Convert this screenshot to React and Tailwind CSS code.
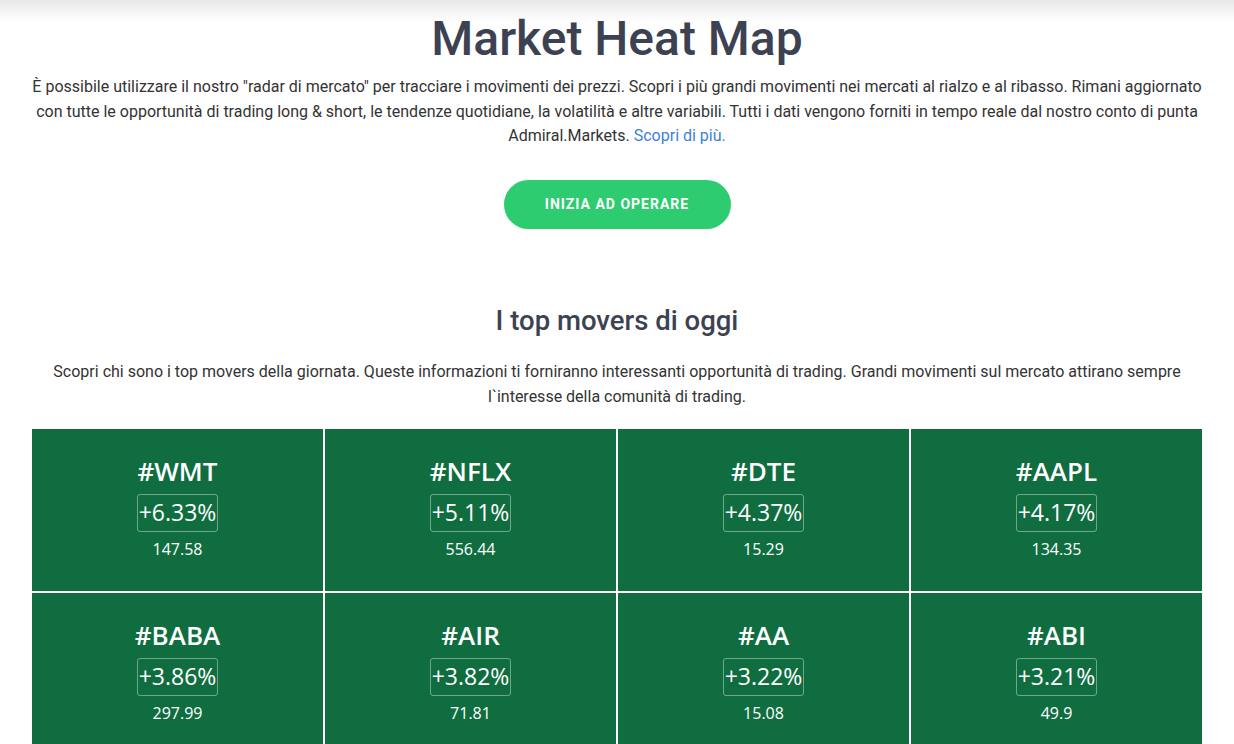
const movers = [
  { t: '#WMT', p: '+6.33%', v: '147.58' },
  { t: '#NFLX', p: '+5.11%', v: '556.44' },
  { t: '#DTE', p: '+4.37%', v: '15.29' },
  { t: '#AAPL', p: '+4.17%', v: '134.35' },
  { t: '#BABA', p: '+3.86%', v: '297.99' },
  { t: '#AIR', p: '+3.82%', v: '71.81' },
  { t: '#AA', p: '+3.22%', v: '15.08' },
  { t: '#ABI', p: '+3.21%', v: '49.9' },
]

function Tile({ t, p, v }) {
  return (
    <div className="bg-[#106d40] h-[162px] flex flex-col items-center pt-[24px] text-white font-['Open_Sans',sans-serif]">
      <div className="text-[26px] leading-[36px] font-semibold">{t}</div>
      <div className="mt-[5px] border border-white/40 rounded-[3px] px-[1px] h-[38px] flex items-center text-[23px]">{p}</div>
      <div className="mt-[6px] text-[16px] leading-[22px]">{v}</div>
    </div>
  )
}

export default function App() {
  return (
    <div className="min-h-[744px] bg-[linear-gradient(to_bottom,#e8e8e8,#ffffff_22px)] font-['Roboto',sans-serif] overflow-hidden">
      <h1 className="pt-[4px] text-center text-[48px] leading-[70px] font-medium text-[#3c4252]">Market Heat Map</h1>
      <div className="w-[1170px] mx-auto text-center">
        <p className="mt-[1px] text-[16px] leading-[24.5px] text-[#333]">
          È possibile utilizzare il nostro "radar di mercato" per tracciare i movimenti dei prezzi. Scopri i più grandi movimenti nei mercati al rialzo e al ribasso. Rimani aggiornato con tutte le opportunità di trading long &amp; short, le tendenze quotidiane, la volatilità e altre variabili. Tutti i dati vengono forniti in tempo reale dal nostro conto di punta Admiral.Markets. <a className="text-[#3d7fe0]">Scopri di più.</a>
        </p>
        <div className="mt-[31px] flex justify-center">
          <button className="w-[227px] h-[49px] rounded-full bg-[#2ecc71] text-white text-[14px] font-bold tracking-[1px]">INIZIA AD OPERARE</button>
        </div>
        <h2 className="mt-[72px] text-[27.5px] leading-[40px] font-medium text-[#3c4252]">I top movers di oggi</h2>
        <p className="mt-[18px] text-[16px] leading-[25px] text-[#333] px-[20px]">
          Scopri chi sono i top movers della giornata. Queste informazioni ti forniranno interessanti opportunità di trading. Grandi movimenti sul mercato attirano sempre l`interesse della comunità di trading.
        </p>
        <div className="mt-[20px] grid grid-cols-4 gap-[2px]">
          {movers.map((m) => (
            <Tile key={m.t} {...m} />
          ))}
        </div>
      </div>
    </div>
  )
}
